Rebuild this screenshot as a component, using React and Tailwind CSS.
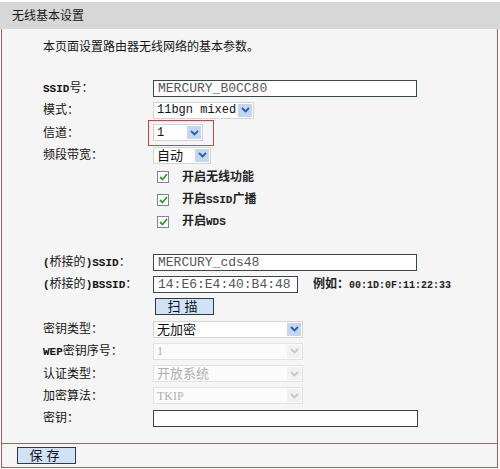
import React from 'react';

const CJK = "font-['Liberation_Sans','Noto_Sans_CJK_SC',sans-serif]";
const MONO = "font-['Liberation_Mono','Noto_Sans_CJK_SC',monospace]";

// 下拉框右侧的箭头按钮
function Arrow({ disabled }) {
  return (
    <span
      className={`flex h-[13px] w-[14px] shrink-0 items-center justify-center ${
        disabled ? 'bg-[#f1f1f1]' : 'bg-[#c3d7f1]'
      }`}
    >
      <svg width="9" height="6" viewBox="0 0 9 6">
        <path
          d="M1 1l3.5 3.5L8 1"
          fill="none"
          stroke={disabled ? '#c9c9c9' : '#2c5ea8'}
          strokeWidth="1.8"
        />
      </svg>
    </span>
  );
}

function Select({ className, children, disabled }) {
  return (
    <div
      className={`flex h-[17px] items-center justify-between border pl-[3px] pr-[1px] ${
        disabled ? 'border-[#e2e2e2] bg-[#fbfbfb] text-[#b0b0b0]' : 'border-[#d4d4d4] bg-white text-[#111]'
      } ${className}`}
    >
      <span className="whitespace-nowrap">{children}</span>
      <Arrow disabled={disabled} />
    </div>
  );
}

function TextInput({ className, value }) {
  return (
    <div
      className={`flex h-[17px] items-center border border-[#38484a] bg-white pl-[4px] ${MONO} text-[13px] leading-none text-[#555] ${className}`}
    >
      {value}
    </div>
  );
}

function Checkbox() {
  return (
    <span className="flex h-[12px] w-[12px] items-center justify-center border border-[#7b8794] bg-white">
      <svg width="9" height="8" viewBox="0 0 9 8">
        <path d="M1 4l2.5 2.5L8 1" fill="none" stroke="#2f9a35" strokeWidth="1.8" />
      </svg>
    </span>
  );
}

function Row({ label, children }) {
  return (
    <div className="flex h-[22.3px] items-center">
      <div className={`w-[110px] shrink-0 ${CJK} text-[12px] leading-none text-[#141414]`}>{label}</div>
      <div className="flex items-center">{children}</div>
    </div>
  );
}

function CheckRow({ children }) {
  return (
    <div className="flex h-[22.3px] items-center pl-[114px]">
      <Checkbox />
      <span className={`ml-[13px] ${CJK} text-[12px] leading-none font-bold text-[#222]`}>{children}</span>
    </div>
  );
}

const Latin = ({ children }) => (
  <span className={`${MONO} text-[11px] font-bold`}>{children}</span>
);

function Button({ children }) {
  return (
    <div
      className={`flex h-[17px] w-[59px] items-center justify-center border border-[#2e3a3c] bg-[#cfe2f7] ${CJK} text-[13px] leading-none tracking-[4px] text-[#111]`}
    >
      {children}
    </div>
  );
}

export default function App() {
  return (
    <div className="h-[469px] w-[500px] bg-white">
      <div className={`mt-[2px] flex h-[27px] items-center bg-[#d7d7d7] pl-[12px] ${CJK} text-[12px] text-[#1a1a1a]`}>
        无线基本设置
      </div>

      <div className="ml-[1px] w-[497px] border-x border-b border-[#b95656] bg-[#f5f5f5] pb-[14px] pl-[41px] pt-[10px]">
        <p className={`${CJK} h-[16px] text-[12px] leading-[16px] text-[#141414]`}>
          本页面设置路由器无线网络的基本参数。
        </p>

        <div className="mt-[22px]">
          <Row label={<><Latin>SSID</Latin>号：</>}>
            <TextInput className="w-[264px]" value="MERCURY_B0CC80" />
          </Row>
          <Row label="模式：">
            <Select className={`w-[101px] ${MONO} text-[12px] leading-none`}>11bgn mixed</Select>
          </Row>
          <Row label="信道：">
            <div className="relative">
              <Select className={`w-[50px] ${MONO} text-[12px] leading-none`}>1</Select>
              <span className="pointer-events-none absolute -bottom-[5px] -left-[5px] -right-[11px] -top-[4px] border border-[#c94545]" />
            </div>
          </Row>
          <Row label="频段带宽：">
            <Select className={`w-[58px] ${CJK} text-[13px] leading-none`}>自动</Select>
          </Row>
          <CheckRow>开启无线功能</CheckRow>
          <CheckRow>
            开启<Latin>SSID</Latin>广播
          </CheckRow>
          <CheckRow>
            开启<Latin>WDS</Latin>
          </CheckRow>

          <div className="h-[17.9px]" />

          <Row label={<><Latin>(</Latin>桥接的<Latin>)SSID</Latin>：</>}>
            <TextInput className="w-[264px]" value="MERCURY_cds48" />
          </Row>
          <Row label={<><Latin>(</Latin>桥接的<Latin>)BSSID</Latin>：</>}>
            <TextInput className="w-[145px]" value="14:E6:E4:40:B4:48" />
            <span className={`ml-[15px] ${CJK} text-[12px] leading-none font-bold text-[#222]`}>
              例如：<span className={`${MONO} text-[10px]`}>00:1D:0F:11:22:33</span>
            </span>
          </Row>
          <Row label="">
            <div className="pl-[2px]">
              <Button>扫描</Button>
            </div>
          </Row>
          <Row label="密钥类型：">
            <Select className={`w-[150px] ${CJK} text-[13px] leading-none`}>无加密</Select>
          </Row>
          <Row label={<><Latin>WEP</Latin>密钥序号：</>}>
            <Select disabled className={`w-[150px] font-['Liberation_Serif',serif] text-[12px] leading-none`}>1</Select>
          </Row>
          <Row label="认证类型：">
            <Select disabled className={`w-[150px] ${CJK} text-[13px] leading-none`}>开放系统</Select>
          </Row>
          <Row label="加密算法：">
            <Select disabled className={`w-[150px] font-['Liberation_Serif',serif] text-[12px] leading-none`}>TKIP</Select>
          </Row>
          <Row label="密钥：">
            <TextInput className="w-[265px]" value="" />
          </Row>
        </div>
      </div>

      <div className="ml-[1px] flex h-[24px] w-[497px] items-center border-x border-b border-[#b95656] bg-[#f5f5f5] pl-[15px]">
        <Button>保存</Button>
      </div>
    </div>
  );
}
